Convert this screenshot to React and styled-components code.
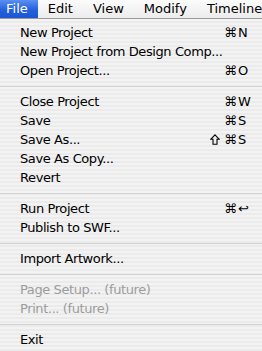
import React from "react"
import styled, { createGlobalStyle } from "styled-components"

const GlobalStyle = createGlobalStyle`
  html, body {
    margin: 0;
    padding: 0;
    background: #f0f0f0;
  }
  body {
    width: 262px;
    height: 351px;
    overflow: hidden;
    font-family: "DejaVu Sans", "Liberation Sans", sans-serif;
    font-size: 13px;
    color: #000;
  }
`

const MenuBar = styled.div`
  display: flex;
  align-items: center;
  height: 18px;
  background: linear-gradient(#fbfbfb, #ececec);
  border-bottom: 1px solid #9a9a9a;
  white-space: nowrap;
  overflow: hidden;
`

const BarItem = styled.div`
  height: 18px;
  line-height: 18px;
  padding: ${p => (p.$active ? "0 10px 0 6px" : "0 10px")};
  color: ${p => (p.$active ? "#fff" : "#000")};
  background: ${p =>
    p.$active ? "linear-gradient(#5b8ff0, #2460dc 55%, #1b55d4)" : "transparent"};
`

const Dropdown = styled.div`
  padding: 4px 0;
  background: repeating-linear-gradient(
    to bottom,
    #f3f3f3 0px,
    #f3f3f3 2px,
    #ebebeb 2px,
    #ebebeb 4px
  );
  min-height: 331px;
`

const Item = styled.div`
  display: flex;
  align-items: center;
  height: 19px;
  padding-left: 20px;
  white-space: nowrap;
  color: ${p => (p.$disabled ? "#9c9c9c" : "#000")};
`

const Label = styled.span`
  flex: 1;
  overflow: hidden;
  letter-spacing: -0.4px;
`

const Shortcut = styled.span`
  display: grid;
  grid-template-columns: 1fr 25px;
  width: 60px;
`

const Mods = styled.span`
  justify-self: end;
  display: flex;
  align-items: center;
  gap: 4px;
`

const Key = styled.span`
  padding-left: 1px;
`

const Separator = styled.div`
  height: 12px;
  display: flex;
  align-items: center;
  &::after {
    content: "";
    flex: 1;
    height: 1px;
    background: #d2d2d2;
  }
`

const ShiftIcon = () => (
  <svg width="10" height="11" viewBox="0 0 10 11">
    <path
      d="M5 0.8 L9.3 5.3 H7 V10.2 H3 V5.3 H0.7 Z"
      fill="none"
      stroke="#000"
      strokeWidth="1.1"
      strokeLinejoin="miter"
    />
  </svg>
)

const menu = [
  { label: "New Project", mods: ["⌘"], key: "N" },
  { label: "New Project from Design Comp..." },
  { label: "Open Project...", mods: ["⌘"], key: "O" },
  "sep",
  { label: "Close Project", mods: ["⌘"], key: "W" },
  { label: "Save", mods: ["⌘"], key: "S" },
  { label: "Save As...", mods: ["shift", "⌘"], key: "S" },
  { label: "Save As Copy..." },
  { label: "Revert" },
  "sep",
  { label: "Run Project", mods: ["⌘"], key: "↩" },
  { label: "Publish to SWF..." },
  "sep",
  { label: "Import Artwork..." },
  "sep",
  { label: "Page Setup... (future)", disabled: true },
  { label: "Print... (future)", disabled: true },
  "sep",
  { label: "Exit" }
]

const bar = ["File", "Edit", "View", "Modify", "Timeline"]

export default function App() {
  return (
    <>
      <GlobalStyle />
      <MenuBar>
        {bar.map((b, i) => (
          <BarItem key={b} $active={i === 0}>
            {b}
          </BarItem>
        ))}
      </MenuBar>
      <Dropdown>
        {menu.map((m, i) =>
          m === "sep" ? (
            <Separator key={i} />
          ) : (
            <Item key={i} $disabled={m.disabled}>
              <Label>{m.label}</Label>
              {m.key && (
                <Shortcut>
                  <Mods>
                    {m.mods.map(k =>
                      k === "shift" ? <ShiftIcon key={k} /> : <span key={k}>{k}</span>
                    )}
                  </Mods>
                  <Key>{m.key}</Key>
                </Shortcut>
              )}
            </Item>
          )
        )}
      </Dropdown>
    </>
  )
}
